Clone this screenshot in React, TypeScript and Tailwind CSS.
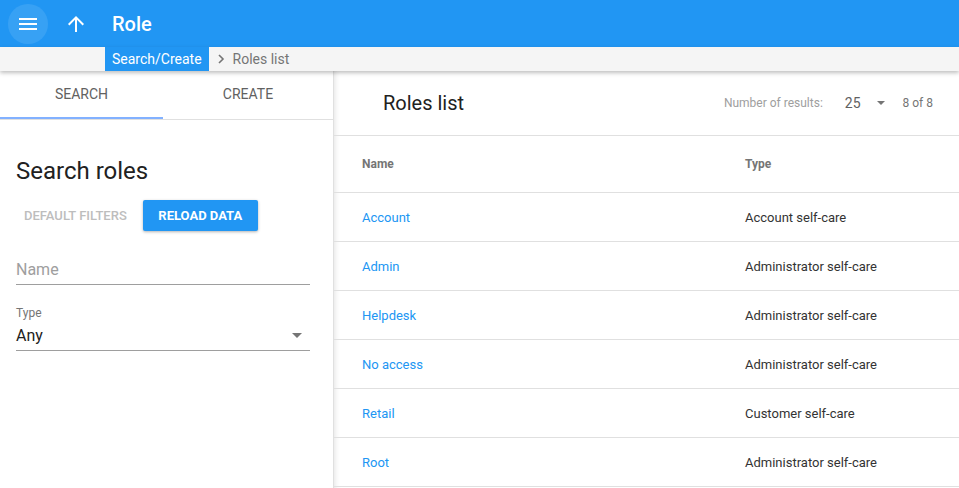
import React from "react";

const rows = [
  ["Account", "Account self-care"],
  ["Admin", "Administrator self-care"],
  ["Helpdesk", "Administrator self-care"],
  ["No access", "Administrator self-care"],
  ["Retail", "Customer self-care"],
  ["Root", "Administrator self-care"],
];

export default function App() {
  return (
    <div className="w-[959px] h-[488px] overflow-hidden bg-white flex flex-col" style={{ fontFamily: "Roboto, 'Liberation Sans', sans-serif" }}>
      {/* Top bar */}
      <div className="h-[47px] bg-[#2196f3] flex items-center shrink-0">
        <div className="ml-[8px] w-[40px] h-[40px] rounded-full bg-white/10 flex items-center justify-center">
          <svg width="20" height="14" viewBox="0 0 20 14">
            <rect x="1" y="1" width="18" height="2" fill="white" />
            <rect x="1" y="6" width="18" height="2" fill="white" />
            <rect x="1" y="11" width="18" height="2" fill="white" />
          </svg>
        </div>
        <div className="ml-[16px] w-[24px] h-[24px] flex items-center justify-center">
          <svg width="24" height="24" viewBox="0 0 24 24">
            <path d="M4 12l1.41 1.41L11 7.83V20h2V7.83l5.58 5.59L20 12l-8-8-8 8z" fill="white" />
          </svg>
        </div>
        <div className="ml-[24px] text-white text-[20px] font-medium leading-none">Role</div>
      </div>
      {/* Breadcrumb */}
      <div className="h-[24px] bg-[#f5f5f5] flex items-stretch shrink-0 relative z-10 shadow-[0_2px_4px_rgba(0,0,0,0.25)]">
        <div className="ml-[105px] bg-[#2196f3] text-white text-[14px] px-[7px] flex items-center">Search/Create</div>
        <div className="flex items-center text-[#757575] text-[14px] ml-[6px]">
          <svg width="12" height="12" viewBox="0 0 12 12" className="mr-[6px]">
            <path d="M4 2l4 4-4 4" fill="none" stroke="#757575" strokeWidth="1.6" />
          </svg>
          Roles list
        </div>
      </div>
      {/* Main */}
      <div className="flex flex-1 min-h-0">
        {/* Left panel */}
        <div className="w-[334px] shrink-0 border-r border-[#e0e0e0] flex flex-col">
          <div className="flex h-[49px] border-b border-[#e0e0e0]">
            <div className="w-[163px] flex items-center justify-center relative text-[14px] text-[#616161] pb-[1px]">
              SEARCH
              <div className="absolute left-0 right-0 bottom-0 h-[2px] bg-[#82b1ff]" />
            </div>
            <div className="flex-1 flex items-center justify-center text-[14px] text-[#616161] pb-[1px]">CREATE</div>
          </div>
          <div className="px-[16px] pr-[23px]">
            <div className="mt-[35px] text-[24px] leading-[32px] text-[#212121]">Search roles</div>
            <div className="mt-[13px] flex items-center gap-[8px]">
              <div className="h-[31px] px-[8px] flex items-center text-[13px] font-medium text-[#bdbdbd]">DEFAULT FILTERS</div>
              <div className="h-[31px] w-[115px] flex items-center justify-center rounded-[2px] bg-[#2196f3] text-white text-[13px] font-bold shadow-[0_1px_3px_rgba(0,0,0,0.3)]">RELOAD DATA</div>
            </div>
            <div className="mt-[24px] h-[30px] border-b border-[#9e9e9e] flex items-center text-[16px] text-[#9e9e9e]">Name</div>
            <div className="mt-[21px] text-[12px] leading-[14px] text-[#757575]">Type</div>
            <div className="h-[31px] pt-[1px] border-b border-[#9e9e9e] flex items-center justify-between text-[16px] text-[#212121]">
              <span>Any</span>
              <svg width="10" height="5" viewBox="0 0 10 5" className="mr-[8px]">
                <path d="M0 0h10L5 5z" fill="#757575" />
              </svg>
            </div>
          </div>
        </div>
        {/* Right panel */}
        <div className="flex-1 flex flex-col shadow-[inset_6px_0_6px_-6px_rgba(0,0,0,0.15)]">
          <div className="h-[65px] border-b border-[#e0e0e0] flex items-center pl-[49px] pr-[26px] shrink-0">
            <div className="text-[20px] text-[#212121]">Roles list</div>
            <div className="ml-auto flex items-center text-[12px] text-[#9e9e9e]">
              <span>Number of results:</span>
              <span className="ml-[22px] text-[14px] text-[#616161]">25</span>
              <svg width="8" height="4" viewBox="0 0 8 4" className="ml-[16px]">
                <path d="M0 0h8L4 4z" fill="#757575" />
              </svg>
              <span className="ml-[18px] text-[#757575]">8 of 8</span>
            </div>
          </div>
          <div className="h-[57px] border-b border-[#e0e0e0] grid grid-cols-[383px_1fr] items-center px-[28px] text-[12px] font-bold text-[#757575] shrink-0">
            <div>Name</div>
            <div>Type</div>
          </div>
          {rows.map(([n, t]) => (
            <div key={n} className="h-[49px] border-b border-[#e0e0e0] grid grid-cols-[383px_1fr] items-center px-[28px] text-[13px] shrink-0 pt-[2px]">
              <div className="text-[#2196f3]">{n}</div>
              <div className="text-[#333333]">{t}</div>
            </div>
          ))}
        </div>
      </div>
    </div>
  );
}
